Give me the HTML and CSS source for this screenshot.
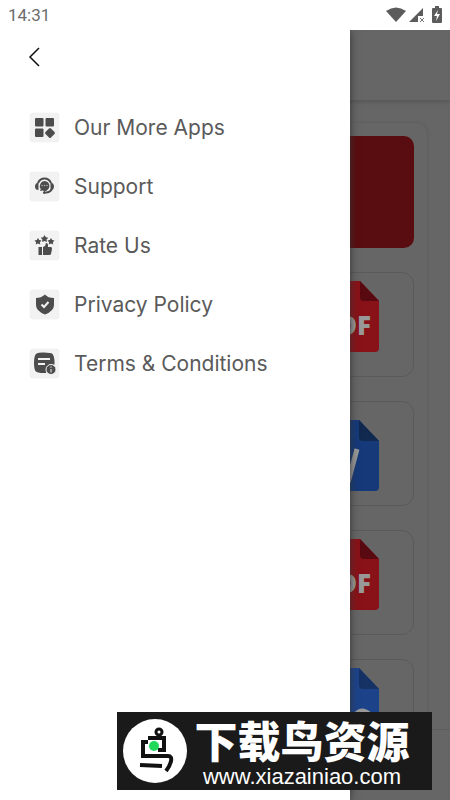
FILE: index.html
```html
<!DOCTYPE html>
<html lang="en">
<head>
<meta charset="utf-8">
<meta name="viewport" content="width=device-width, initial-scale=1">
<title>PDF Tools</title>
<link rel="stylesheet" href="styles.css">
</head>
<body>
<header class="status">
  <time>14:31</time>
  <svg class="signals" width="58" height="18" viewBox="0 0 58 18" aria-hidden="true">
    <path d="M0 5Q10-2 20 5L10 16Z"/>
    <path d="M37 2V10H32V16H23Z"/>
    <path class="cross" d="M34 12l4 4M38 12l-4 4"/>
    <path fill-rule="evenodd" d="M49 0h4v2h2q1 0 1 1v13q0 1-1 1h-8q-1 0-1-1V3q0-1 1-1h2ZM52 4l-4 6h3l-1 5 4-7h-3Z"/>
  </svg>
</header>
<div class="screen">
  <main class="app">
    <div class="appbar"></div>
    <div class="panel">
      <div class="banner"></div>
      <div class="card"><svg class="file red" viewBox="0 0 56 71"><path d="M4 0H37L56 20V67Q56 71 52 71H4Q0 71 0 67V4Q0 0 4 0Z"/><path class="fold" d="M37 0L56 20H41Q37 20 37 16Z"/><text x="48" y="54">PDF</text></svg></div>
      <div class="card low"><svg class="file blue" viewBox="0 0 56 71"><path d="M4 0H36L56 21V67Q56 71 52 71H4Q0 71 0 67V4Q0 0 4 0Z"/><path class="fold" d="M36 0L56 21H40Q36 21 36 17Z"/><path class="letter" d="M6 30l5 25 8-20 8 20 7-26"/></svg></div>
      <div class="card"><svg class="file red" viewBox="0 0 56 71"><path d="M4 0H37L56 20V67Q56 71 52 71H4Q0 71 0 67V4Q0 0 4 0Z"/><path class="fold" d="M37 0L56 20H41Q37 20 37 16Z"/><text x="48" y="54">PDF</text></svg></div>
      <div class="card"><svg class="file sky" viewBox="0 0 56 71"><path d="M4 0H36L56 21V67Q56 71 52 71H4Q0 71 0 67V4Q0 0 4 0Z"/><path class="fold" d="M36 0L56 21H40Q36 21 36 17Z"/><path class="letter" d="M46 46q-7-6-13 0t0 12 13 0"/></svg></div>
    </div>
    <div class="tabs"></div>
  </main>
  <aside class="drawer">
    <button class="back" aria-label="Back"><svg width="12" height="20" viewBox="0 0 12 20"><path d="M11 1L2 10l9 9"/></svg></button>
    <nav class="menu">
      <a href="#apps"><svg class="icon" viewBox="0 0 29 29"><rect x="5" y="5" width="8.500" height="8.500" rx="1"/><rect x="15.500" y="5" width="8.500" height="8.500" rx="1"/><rect x="5" y="15.500" width="8.500" height="8.500" rx="1"/><path d="M19 15.500q1-1 2 0l3.500 3.500q1 1 0 2L21 24.500q-1 1-2 0L15.500 21q-1-1 0-2Z"/></svg>Our More Apps</a>
      <a href="#support"><svg class="icon" viewBox="0 0 29 29"><path class="line" d="M8 11Q10 6.500 14.500 6.500T21 11M22 17q-2 3.500-6 3.500"/><path d="M8.500 10.500v7.500Q5 18 5 14.500T8.500 10.500ZM20.500 10.500v7.500q3.500 0 3.500-3.500T20.500 10.500Z"/><path d="M14.500 9a5 5 0 1 1-2 9.600L10 19l.8-2A5 5 0 0 1 14.500 9Z"/><circle cx="14.500" cy="20.500" r="1.500"/><g class="light"><circle cx="12" cy="13.500" r="0.800"/><circle cx="14.500" cy="13.500" r="0.800"/><circle cx="17" cy="13.500" r="0.800"/></g></svg>Support</a>
      <a href="#rate"><svg class="icon" viewBox="0 0 29 29"><path d="M14.500 4l1.300 2.200 2.500.5-1.700 1.900.3 2.500-2.400-1-2.400 1 .3-2.500-1.700-1.900 2.500-.5Z"/><path d="M8 7l1.200 2 2.300.5-1.600 1.700.3 2.300L8 12.500l-2.200 1 .3-2.300-1.600-1.700L6.800 9ZM21 7l1.200 2 2.300.5-1.600 1.700.3 2.300-2.200-1-2.200 1 .3-2.300-1.600-1.700 2.300-.5Z"/><path d="M8.500 16h3.500v8H8.500ZM13 16l2-1 1-3q2 0 2 2v2h3q1 0 1 2l-1 5q0 1-2 1h-6Z"/></svg>Rate Us</a>
      <a href="#privacy"><svg class="icon" viewBox="0 0 29 29"><path d="M15 4.500Q18 8 24 8v7q0 6-9 9.500Q6 21 6 15V8q5 0 9-3.500Z"/><path class="line white" d="M11.500 14.500l2.500 2.500 4.500-5"/></svg>Privacy Policy</a>
      <a href="#terms"><svg class="icon" viewBox="0 0 29 29"><path d="M14 3.500q7 0 8.500 1.500T24.500 12v3.500q-8 0-8.500 8.500h-2q-7 0-8.500-2T4 14t1.500-8.500T14 3.500Z"/><path class="line white" d="M8 10h12M8 15h7"/><circle class="ring" cx="21" cy="20.500" r="5"/><path class="line white thin" d="M21 20v3.500M21 17.500v1.200"/></svg>Terms &amp; Conditions</a>
    </nav>
  </aside>
</div>
<div class="brand">
  <svg class="bird" width="66" height="66" viewBox="0 0 66 66" aria-hidden="true"><circle class="disc" cx="33" cy="33" r="32"/><circle class="loop" cx="37" cy="14" r="3"/><path d="M26 20H42V32H36M26 24H21V38H46Q50 38 49 43T44 53M18 47l22 1"/><circle class="eye" cx="32" cy="28" r="5"/></svg>
  <div class="words"><strong lang="zh-CN">下载鸟资源</strong><span>www.xiazainiao.com</span></div>
</div>
</body>
</html>
```
FILE: styles.css
```css
* { box-sizing: border-box; }

body {
  margin: 0;
  min-height: 100vh;
  display: flex;
  flex-direction: column;
  position: relative;
  background: #fff;
  font-family: Inter, sans-serif;
}

.status {
  height: 30px;
  padding: 0 6px 0 8px;
  display: flex;
  align-items: center;
  justify-content: space-between;
  color: #6c6c6c;
  font: 400 17px Roboto, sans-serif;
}

.signals { fill: #5c5c5c; }
.cross { stroke: #777; stroke-width: 1; }

.screen {
  flex: 1;
  position: relative;
  overflow: hidden;
}

.app {
  position: absolute;
  inset: 0;
  display: flex;
  flex-direction: column;
  background: #666;
}

.appbar {
  flex: none;
  height: 70px;
  box-shadow: 0 1px 5px #505050;
}

.panel {
  flex: 1;
  min-height: 0;
  margin: 22px 22px 0;
  padding: 13px 13px 0;
  display: flex;
  flex-direction: column;
  align-items: flex-end;
  gap: 24px;
  overflow: hidden;
  border: 1px solid #606060;
  border-bottom: 0;
  border-radius: 12px 12px 0 0;
  box-shadow: 0 0 3px #606060;
}

.banner {
  flex: none;
  width: 100%;
  height: 112px;
  border-radius: 10px;
  background: #5a0d10;
}

.card {
  flex: none;
  width: 126px;
  height: 105px;
  padding-top: 8px;
  display: flex;
  justify-content: center;
  align-items: flex-start;
  border: 1px solid #5a5a5a;
  border-radius: 12px;
}

.low { padding-top: 18px; }
.file { width: 56px; height: 71px; }
.file text { fill: #999; font: 800 26px "Open Sans", sans-serif; text-anchor: end; }
.red { fill: #881218; }
.red .fold { fill: #590a10; }
.blue { fill: #153979; }
.blue .fold { fill: #11294f; }
.sky { fill: #1c438a; }
.sky .fold { fill: #163264; }
.letter { fill: none; stroke: #999; stroke-width: 5; }

.tabs {
  flex: none;
  height: 71px;
  border-top: 1px solid #5d5d5d;
}

.drawer {
  position: absolute;
  inset: 0 100px 0 0;
  padding: 12px 28px;
  background: #fff;
  box-shadow: 0 0 8px #333;
}

.back {
  display: flex;
  align-items: center;
  height: 30px;
  padding: 0;
  border: 0;
  background: none;
}

.back path { fill: none; stroke: #111; stroke-width: 1.5; }

.menu {
  margin: 40px 2px 0;
  display: flex;
  flex-direction: column;
  gap: 29px;
}

.menu a {
  display: flex;
  align-items: center;
  gap: 15px;
  height: 30px;
  color: #5a5a5a;
  font-size: 21px;
  font-weight: 400;
  white-space: nowrap;
  text-decoration: none;
}

.icon {
  flex: none;
  width: 29px;
  height: 29px;
  border-radius: 4px;
  background: #f2f2f2;
  box-shadow: 0 0 1px #ccc;
  fill: #4c4c4c;
}

.line { fill: none; stroke: #4c4c4c; stroke-width: 2; }
.white { stroke: #f2f2f2; }
.thin { stroke-width: 1; }
.light { fill: #aaa; }
.ring { stroke: #f2f2f2; stroke-width: 1; }

.brand {
  position: absolute;
  right: 18px;
  bottom: 10px;
  width: 315px;
  height: 78px;
  padding-left: 5px;
  display: flex;
  align-items: center;
  background: #1a1a1a;
  color: #fff;
}

.bird { flex: none; fill: none; stroke: #111; stroke-width: 4; }
.disc { fill: #fff; stroke: none; }
.loop { stroke-width: 3; }
.eye { fill: #20d85a; stroke: none; }

.words {
  flex: 1;
  padding-right: 16px;
  display: flex;
  flex-direction: column;
  align-items: center;
  white-space: nowrap;
}

.words strong { font: 900 43px/52px "Noto Sans CJK SC", sans-serif; }
.words span { font: 22px/24px "Liberation Sans", sans-serif; }
```
